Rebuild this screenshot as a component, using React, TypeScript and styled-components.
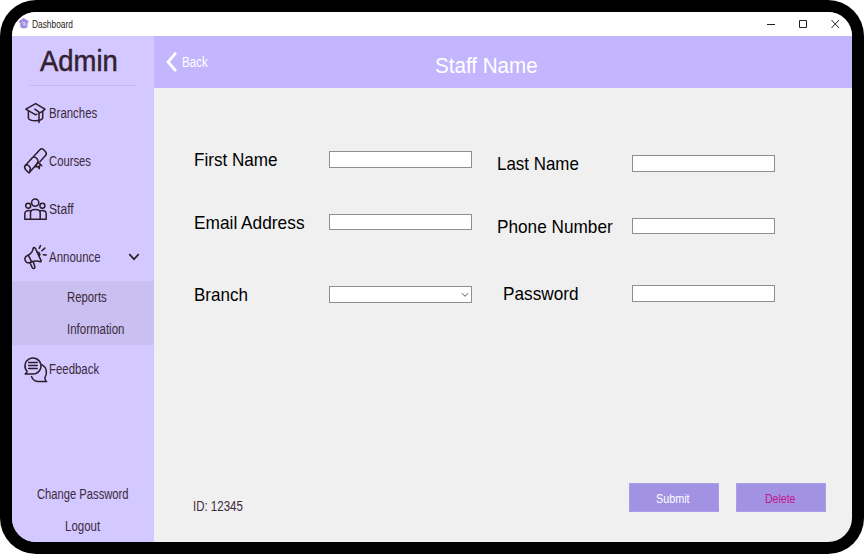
import React from "react";
import styled, { createGlobalStyle } from "styled-components";

const ink = "#3b2a3a";

const GlobalStyle = createGlobalStyle`
  * { box-sizing: border-box; }
  body {
    margin: 0;
    background: #fff;
    font-family: "Liberation Sans", Arial, sans-serif;
    overflow: hidden;
  }
`;

const Frame = styled.div`
  width: 864px;
  height: 554px;
  padding: 12px;
  background: #000;
  border-radius: 36px;
`;

const Window = styled.div`
  height: 530px;
  display: flex;
  flex-direction: column;
  border-radius: 24px;
  overflow: hidden;
  background: #f0f0f0;
`;

const TitleBar = styled.header`
  height: 24px;
  flex: none;
  display: flex;
  align-items: center;
  padding: 0 12px 0 6px;
  background: #fff;
  color: #1c1c1c;
`;

const WindowControls = styled.div`
  margin-left: auto;
  display: flex;
  gap: 22px;
`;

const Body = styled.div`
  flex: 1;
  display: flex;
  min-height: 0;
`;

const Sidebar = styled.nav`
  width: 142px;
  flex: none;
  display: flex;
  flex-direction: column;
  background: #d3c8ff;
`;

const Brand = styled.div`
  height: 49px;
  margin: 0 18px;
  padding: 8px 0 0 10px;
  line-height: 34px;
  color: #33202f;
  -webkit-text-stroke: 0.5px #33202f;
`;

const Divider = styled.div`
  height: 1px;
  margin: 0 18px 3px;
  background: #c3b8ec;
`;

const NavItem = styled.a`
  height: 48px;
  display: flex;
  align-items: center;
  padding: 0 14px 1px 12px;
  color: ${ink};
`;

const NavIcon = styled.svg`
  width: 24px;
  height: 28px;
  flex: none;
  margin-right: 1px;
  overflow: visible;
  fill: none;
  stroke: #2e1c2b;
  stroke-width: 1.5;
  stroke-linecap: round;
  stroke-linejoin: round;
`;

const Caret = styled.svg`
  margin-left: auto;
  flex: none;
`;

const SubMenu = styled.div`
  background: #c9bff0;
`;

const SubItem = styled.a`
  height: 32px;
  display: flex;
  align-items: center;
  padding-left: 55px;
  color: ${ink};
`;

const AccountLinks = styled.div`
  margin-top: auto;
`;

const AccountLink = styled.a`
  height: 32px;
  display: flex;
  align-items: center;
  justify-content: center;
  padding-right: 1px;
  color: ${ink};
`;

const Text = styled.span<{ $size: number; $width: number }>`
  flex: none;
  width: ${(p) => p.$width}px;
  font-size: ${(p) => p.$size}px;
  white-space: nowrap;
`;

const Squeezed = styled.span<{ $scale: number }>`
  display: inline-block;
  transform: scaleX(${(p) => p.$scale});
  transform-origin: 0 50%;
`;

const Main = styled.main`
  flex: 1;
  display: flex;
  flex-direction: column;
`;

const PageHeader = styled.div`
  height: 52px;
  flex: none;
  display: flex;
  align-items: center;
  padding-left: 12px;
  background: #c3b6ff;
  color: #fff;
`;

const BackLink = styled.a`
  display: flex;
  align-items: center;
  gap: 5px;
  width: 269px;
`;

const PageTitle = styled.div`
  padding-top: 7px;
`;

const Form = styled.form`
  flex: 1;
  display: flex;
  gap: 25px;
  padding: 63px 0 0 40px;
`;

const FieldColumn = styled.div<{ $rows: string; $offset: number }>`
  width: 278px;
  padding-top: ${(p) => p.$offset}px;
  display: grid;
  align-content: start;
  grid-template-rows: ${(p) => p.$rows};
`;

const Field = styled.label<{ $indent?: number }>`
  display: flex;
  align-items: flex-start;
  justify-content: space-between;
  height: 17px;
  padding-left: ${(p) => p.$indent ?? 0}px;
  line-height: 17px;
  color: #000;
`;

const Input = styled.span<{ $height?: number }>`
  width: 143px;
  height: ${(p) => p.$height ?? 17}px;
  display: flex;
  align-items: center;
  justify-content: flex-end;
  padding-right: 2px;
  background: #fff;
  border: 1px solid #8e8e8e;
`;

const Footer = styled.div`
  height: 59px;
  flex: none;
  display: flex;
  padding: 0 26px 0 39px;
  gap: 17px;
  color: ${ink};
`;

const RecordId = styled.div`
  flex: 1;
  padding-top: 14px;
`;

const Button = styled.button<{ $danger?: boolean }>`
  width: 90px;
  height: 29px;
  display: flex;
  align-items: center;
  justify-content: center;
  padding: 1px 2px 0 0;
  border: 1px solid #ab9de8;
  background: #a292e4;
  color: ${(p) => (p.$danger ? "#c2188b" : "#fff")};
  font-family: inherit;
`;

function Label({ size, width, scale, children }: {
  size: number;
  width: number;
  scale: number;
  children: React.ReactNode;
}) {
  return (
    <Text $size={size} $width={width}>
      <Squeezed $scale={scale}>{children}</Squeezed>
    </Text>
  );
}

const BranchesIcon = () => (
  <NavIcon viewBox="0 0 24 28">
    <path d="M15.2 14.1 18.4 12.3 21 10.2 11.7 4.6 1.8 10.2l9.9 5.6 1.2-.6" />
    <path d="M4.4 12.2v7c1.4 3.4 12.6 3.4 14.3 0v-6.9" />
    <path d="m10.8 10.2 4.2 3v10.4" />
  </NavIcon>
);

const CoursesIcon = () => (
  <NavIcon viewBox="0 0 24 28">
    <path d="m9.6 9.6 6.2-6.8c1.2-1.3 2.6-1.3 3.9 0l1.8 2c1.1 1.3 1.1 2.6 0 3.8l-5.6 6.2" />
    <path d="M7.6 11.6c1.2-2 3.4-2.2 5.2-.2s1.8 4.4-.2 6" />
    <path d="m7.6 11.6-6.3 6.9m3.9 7.3 7.2-8.2" />
    <path d="M1.3 18.5c1.2-1 2.7-.7 3.9.7 1.5 1.6 1.6 3.2.5 4.6M1.3 18.5c-1.2 1.3-.7 2.9.6 4.4 1.3 1.4 2.3 2.9 3.4 2.9" />
    <path d="m13.4 15.6-2 4.2 2.4-.4 1.4 2.2.7-5.2m-1.9-1 3.8 3.4" />
  </NavIcon>
);

const StaffIcon = () => (
  <NavIcon viewBox="0 0 24 28">
    <circle cx="11.2" cy="7.6" r="3.6" />
    <circle cx="4.2" cy="10.8" r="2.5" />
    <circle cx="18.4" cy="10.8" r="2.5" />
    <path d="M6.5 24.3v-6.6c0-4.3 9.7-4.3 9.7 0v6.6" />
    <path d="M6.2 15.7c-3.2-.6-5.4.5-5.4 3v5.6h21.4v-5.6c0-2.5-2.2-3.6-5.6-3" />
  </NavIcon>
);

const AnnounceIcon = () => (
  <NavIcon viewBox="0 0 24 28">
    <path d="M9.2 5.6c-.7 3.4-2.2 5.2-5.4 6.8-2.5 1.2-3.3 3-2.7 4.9.7 2.1 2.6 3 4.9 2.2 3.6-1.4 6.8-1.9 10-.9" />
    <path d="M9.2 5.2c.6-1 1.7-.7 2.2.2l5.7 12.2c.4.9-.3 1.3-1.1 1M4.4 12.2l3.2 6.6" />
    <path d="m6 20 2.4 4.8c.8 1.3 3 .5 2.5-1.1l-1.7-4.9m4.2-9.4c2-.4 3.2 2 1.7 3.4" />
    <path d="m15.2 5.3 1.3-2.7m1.4 5.2 2.9-2.7m-1.5 6.6 3 .2" />
  </NavIcon>
);

const FeedbackIcon = () => (
  <NavIcon viewBox="0 0 24 28">
    <path d="M3.1 16.4A8 8 0 1 1 8.8 19H1.2c1-.6 1.6-1.4 1.9-2.6Z" />
    <path d="M4.6 7.4h8.6M4.6 10.4h8.6M4.6 13.4h8.6" />
    <path d="M18 9.7c4.6 2.8 5.8 8.4 2.9 12.9 0 1.7.5 3.1 1.7 4h-8.2c-3.5 0-5.8-2-6.9-5" />
  </NavIcon>
);

export default function App() {
  return (
    <>
      <GlobalStyle />
      <Frame>
        <Window>
          <TitleBar>
            <svg width="14" height="12" viewBox="0 0 14 12">
              <path d="M5.5 0 11 3.2 9.6 5v3.8c-1.7 2.1-6 2.1-7.4 0V5L.3 3.4Z" fill="#a18ce3" />
              <path d="M4 4.8h3.4L5.4 7h3" fill="none" stroke="#ded6fa" strokeWidth="1" />
            </svg>
            <Label size={10} width={60} scale={0.835}>Dashboard</Label>
            <WindowControls>
              <svg width="10" height="10"><path d="M1 5.5h8" stroke="#222" /></svg>
              <svg width="10" height="10"><path d="M1.5 1.5h7v7h-7z" fill="none" stroke="#222" /></svg>
              <svg width="10" height="10"><path d="m1.5 1 7.5 8m0-8-7.5 8" stroke="#222" /></svg>
            </WindowControls>
          </TitleBar>
          <Body>
            <Sidebar>
              <Brand><Label size={30} width={78} scale={0.915}>Admin</Label></Brand>
              <Divider />
              <NavItem><BranchesIcon /><Label size={14} width={50} scale={0.815}>Branches</Label></NavItem>
              <NavItem><CoursesIcon /><Label size={14} width={50} scale={0.805}>Courses</Label></NavItem>
              <NavItem><StaffIcon /><Label size={14} width={50} scale={0.865}>Staff</Label></NavItem>
              <NavItem>
                <AnnounceIcon />
                <Label size={14} width={54} scale={0.82}>Announce</Label>
                <Caret width="12" height="8"><path d="m1.3 1.2 4.7 5 4.7-5" fill="none" stroke="#2e1c2b" strokeWidth="1.7" /></Caret>
              </NavItem>
              <SubMenu>
                <SubItem><Label size={14} width={50} scale={0.81}>Reports</Label></SubItem>
                <SubItem><Label size={14} width={60} scale={0.82}>Information</Label></SubItem>
              </SubMenu>
              <NavItem><FeedbackIcon /><Label size={14} width={54} scale={0.815}>Feedback</Label></NavItem>
              <AccountLinks>
                <AccountLink><Label size={14} width={92} scale={0.8}>Change Password</Label></AccountLink>
                <AccountLink><Label size={14} width={36} scale={0.82}>Logout</Label></AccountLink>
              </AccountLinks>
            </Sidebar>
            <Main>
              <PageHeader>
                <BackLink>
                  <svg width="11" height="20"><path d="M9.2 1.6 2 10l7.2 8.2" fill="none" stroke="#fff" strokeWidth="2.8" strokeLinecap="round" /></svg>
                  <Label size={14} width={28} scale={0.83}>Back</Label>
                </BackLink>
                <PageTitle><Label size={22.5} width={104} scale={0.915}>Staff Name</Label></PageTitle>
              </PageHeader>
              <Form>
                <FieldColumn $offset={0} $rows="63px 72px 17px">
                  <Field><Label size={18.6} width={84} scale={0.92}>First Name</Label><Input /></Field>
                  <Field><Label size={18.6} width={112} scale={0.93}>Email Address</Label><Input $height={16} /></Field>
                  <Field>
                    <Label size={18.6} width={54} scale={0.915}>Branch</Label>
                    <Input><svg width="8" height="6"><path d="m1 1.3 3 3 3-3" fill="none" stroke="#555" /></svg></Input>
                  </Field>
                </FieldColumn>
                <FieldColumn $offset={4} $rows="63px 67px 17px">
                  <Field><Label size={18.6} width={84} scale={0.91}>Last Name</Label><Input /></Field>
                  <Field><Label size={18.6} width={116} scale={0.925}>Phone Number</Label><Input $height={16} /></Field>
                  <Field $indent={6}><Label size={18.6} width={78} scale={0.925}>Password</Label><Input /></Field>
                </FieldColumn>
              </Form>
              <Footer>
                <RecordId><Label size={14} width={52} scale={0.82}>ID: 12345</Label></RecordId>
                <Button type="button"><Label size={13} width={34} scale={0.83}>Submit</Label></Button>
                <Button type="button" $danger><Label size={13} width={31} scale={0.81}>Delete</Label></Button>
              </Footer>
            </Main>
          </Body>
        </Window>
      </Frame>
    </>
  );
}
